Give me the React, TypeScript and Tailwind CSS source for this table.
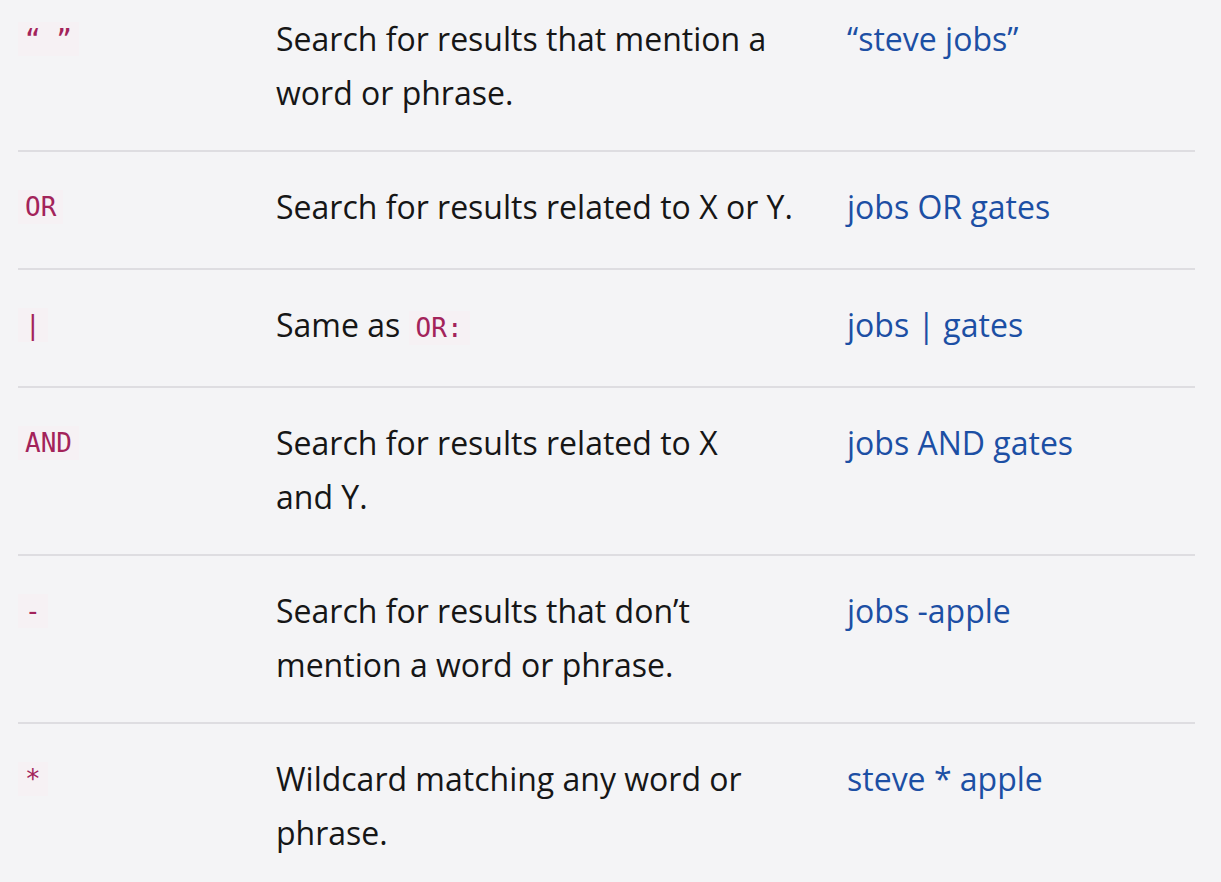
import React from 'react';

type Row = {
  op: string;
  desc: React.ReactNode;
  example: string;
  twoLine?: boolean;
};

const Code = ({ children }: { children: React.ReactNode }) => (
  <code className="bg-[#f6f1f4] text-[#a3235a] font-['DejaVu_Sans_Mono',monospace] text-[26px] px-[7px] py-[2px]">
    {children}
  </code>
);

const rows: Row[] = [
  {
    op: '“ ”',
    desc: (
      <>
        Search for results that mention a<br />
        word or phrase.
      </>
    ),
    example: '“steve jobs”',
    twoLine: true,
  },
  { op: 'OR', desc: 'Search for results related to X or Y.', example: 'jobs OR gates' },
  {
    op: '|',
    desc: (
      <>
        Same as <Code>OR:</Code>
      </>
    ),
    example: 'jobs | gates',
  },
  {
    op: 'AND',
    desc: (
      <>
        Search for results related to X<br />
        and Y.
      </>
    ),
    example: 'jobs AND gates',
    twoLine: true,
  },
  {
    op: '-',
    desc: (
      <>
        Search for results that don’t<br />
        mention a word or phrase.
      </>
    ),
    example: 'jobs -apple',
    twoLine: true,
  },
  {
    op: '*',
    desc: (
      <>
        Wildcard matching any word or<br />
        phrase.
      </>
    ),
    example: 'steve * apple',
    twoLine: true,
  },
];

const App = () => {
  return (
    <div className="min-h-screen w-full bg-[#f4f4f6] overflow-hidden font-['Open_Sans',sans-serif] text-[#161616]">
      <div className="-mt-[16px] ml-[18px] mr-[26px]">
        {rows.map((row, i) => (
          <div
            key={i}
            className={`grid grid-cols-[258px_571px_1fr] leading-[54px] pt-[28px] ${
              row.twoLine ? 'pb-[30px]' : 'pb-[31px]'
            } ${i < rows.length - 1 ? 'border-b-2 border-[#dedde1]' : ''}`}
          >
            <div>
              <Code>{row.op}</Code>
            </div>
            <div className="text-[32px]">{row.desc}</div>
            <div className="text-[32px] text-[#1c4fa4]">{row.example}</div>
          </div>
        ))}
      </div>
    </div>
  );
};

export default App;
